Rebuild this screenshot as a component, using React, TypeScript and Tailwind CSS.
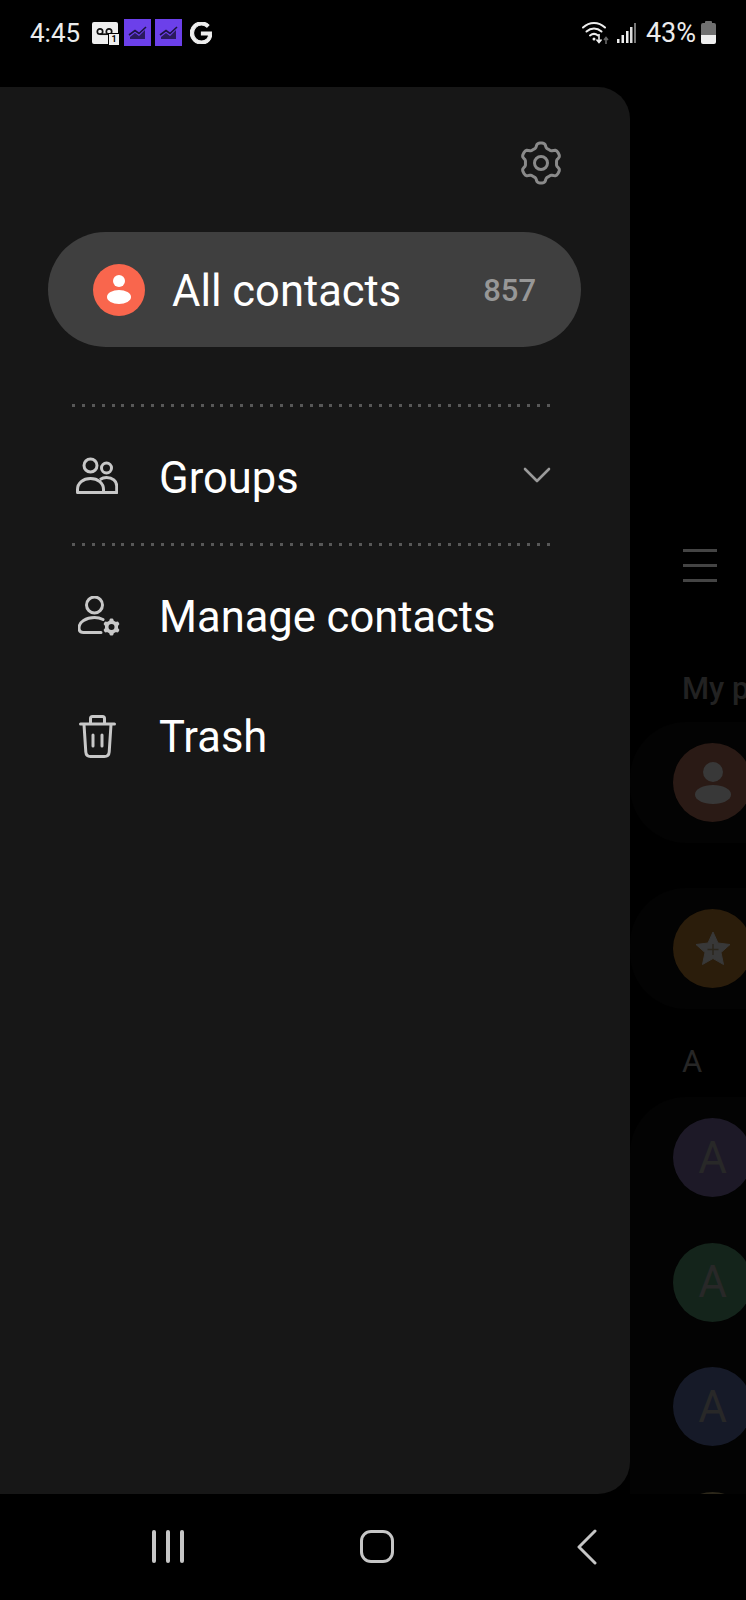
import { ChevronDown } from "lucide-react";
import { SiGoogle } from "react-icons/si";

// six rounded lobes, used for both the big settings gear and the small badge gear
function gearPath(cx: number, cy: number, outer: number, inner: number) {
  const points: string[] = [];
  for (let i = 0; i < 120; i++) {
    const angle = (i / 120) * Math.PI * 2;
    const wave = Math.cos(6 * angle);
    const blend = (Math.tanh(wave * 2.2) + 1) / 2;
    const radius = inner + (outer - inner) * blend;
    const x = cx + radius * Math.sin(angle);
    const y = cy - radius * Math.cos(angle);
    points.push(`${x.toFixed(2)} ${y.toFixed(2)}`);
  }
  return `M${points.join("L")}Z`;
}

function PurpleChart() {
  return (
    <div className="flex h-[27px] w-[27px] items-center justify-center bg-[#6c40ea]">
      <svg viewBox="0 0 27 27" className="h-[27px] w-[27px]">
        <path d="M6 20v-2l5-4 4 3 6-6v9z" fill="#2a1a5e" />
        <path
          d="M5 16l6-4.5 4 3 7-6.5"
          fill="none"
          stroke="#1c1240"
          strokeWidth="1.6"
        />
      </svg>
    </div>
  );
}

function Voicemail() {
  return (
    <div className="relative h-[22px] w-[26px] rounded-[2px] bg-[#efefef]">
      <svg viewBox="0 0 26 22" className="h-[22px] w-[26px]">
        <circle cx="8" cy="9.5" r="2.7" fill="none" stroke="#111" strokeWidth="1.7" />
        <circle cx="17" cy="9.5" r="2.7" fill="none" stroke="#111" strokeWidth="1.7" />
        <path d="M8 12.2h9" stroke="#111" strokeWidth="1.7" />
      </svg>
      <span className="absolute -bottom-[1px] -right-[1px] flex h-[11px] w-[10px] items-center justify-center bg-[#efefef] text-[9px] font-bold leading-none text-black outline outline-1 outline-black">
        1
      </span>
    </div>
  );
}

function StatusBar() {
  return (
    <div className="flex h-[87px] shrink-0 items-start justify-between pl-[30px] pr-[30px] pt-[19px]">
      <div className="flex h-[27px] items-center">
        <span className="text-[26px] leading-none text-[#ececec]">4:45</span>
        <div className="ml-[12px] flex items-center gap-[5px]">
          <Voicemail />
          <div className="ml-[1px]">
            <PurpleChart />
          </div>
          <div className="-ml-[1px]">
            <PurpleChart />
          </div>
          <SiGoogle
            stroke="currentColor"
            strokeWidth={1.2}
            className="ml-[3px] h-[22px] w-[22px] text-[#efefef]"
          />
        </div>
      </div>
      <div className="flex h-[27px] items-center">
        <svg viewBox="0 0 27 26" className="h-[26px] w-[27px]">
          <g fill="none" stroke="#eee" strokeWidth="2" strokeLinecap="round">
            <path d="M1 7.5c6.5-6 15.5-6 22 0" />
            <path d="M4.5 11.5c4.5-4 10.5-4 15 0" />
            <path d="M8 15.5c2.5-2 5.500-2 8 0" />
          </g>
          <circle cx="12" cy="19" r="1.5" fill="#eee" />
          <path d="M17 14v8m-2.500-2.500l2.500 3 2.500-3" fill="none" stroke="#eee" strokeWidth="1.600" />
          <path d="M24 24v-6m-2 2l2-2.500 2 2.500" fill="none" stroke="#666" strokeWidth="1.600" />
        </svg>
        <svg viewBox="0 0 19 22" className="ml-[8px] h-[22px] w-[19px]">
          <rect x="0" y="17" width="2.500" height="4" fill="#eee" />
          <rect x="4.500" y="13" width="2.500" height="8" fill="#eee" />
          <rect x="9" y="9" width="2.500" height="12" fill="#eee" />
          <rect x="13" y="5" width="2.500" height="16" fill="#ddd" />
          <rect x="17" y="1" width="2" height="20" fill="#777" />
        </svg>
        <span className="ml-[10px] mt-[2px] text-[27px] leading-none text-[#ececec]">
          43%
        </span>
        <div className="ml-[5px] flex h-[23px] w-[15px] flex-col items-center">
          <div className="h-[2px] w-[7px] rounded-t-[1px] bg-[#707070]" />
          <div className="flex w-full flex-1 flex-col overflow-hidden rounded-[2px]">
            <div className="flex-1 bg-[#707070]" />
            <div className="h-[9px] bg-[#efefef]" />
          </div>
        </div>
      </div>
    </div>
  );
}

function DottedLine() {
  return (
    <div className="ml-[72px] mr-[78px] h-[3px] bg-[repeating-linear-gradient(90deg,#585858_0,#585858_3px,transparent_3px,transparent_9.9px)]" />
  );
}

function Drawer() {
  return (
    <aside className="w-[630px] shrink-0 rounded-r-[32px] bg-[#171717] pt-[54px]">
      <div className="flex justify-end pr-[67px]">
        <svg viewBox="0 0 44 44" className="h-[44px] w-[44px]">
          <path
            d={gearPath(22, 22, 20, 15.5)}
            fill="none"
            stroke="#8a8a8a"
            strokeWidth="3"
            strokeLinejoin="round"
          />
          <circle cx="22" cy="22" r="6.500" fill="none" stroke="#8a8a8a" strokeWidth="3" />
        </svg>
      </div>
      <div className="ml-[48px] mr-[49px] mt-[47px] flex h-[115px] items-center rounded-full bg-[#3f3f3f] pl-[45px] pr-[45px]">
        <div className="flex h-[52px] w-[52px] shrink-0 flex-col items-center justify-center rounded-full bg-[#f9664d]">
          <div className="h-[12px] w-[12px] rounded-full bg-white" />
          <div className="mt-[3px] h-[14px] w-[24px] rounded-[50%] bg-white" />
        </div>
        <span className="ml-[27px] mt-[5px] flex-1 text-[43.5px] leading-none text-white">
          All contacts
        </span>
        <span className="mt-[2px] text-[31px] font-medium leading-none text-[#979797]">
          857
        </span>
      </div>
      <div className="mt-[57px]">
        <DottedLine />
      </div>
      <div className="flex h-[136px] items-center pl-[76px] pr-[78px]">
        <svg
          viewBox="0 0 42 37"
          className="h-[37px] w-[42px] shrink-0"
          fill="none"
          stroke="#c8c8c8"
          strokeWidth="3"
        >
          <circle cx="14.500" cy="8.500" r="6.500" />
          <circle cx="30.500" cy="11" r="5" />
          <path
            d="M1.500 35.500v-3c0-6.500 5.500-11 13-11s13 4.500 13 11v3zM24 22.500c1.800-1.200 4-2 6.500-2 6 0 10.200 3.500 10.200 8.500v6.500H27.500"
            strokeLinejoin="round"
          />
        </svg>
        <span className="ml-[41px] mt-[7px] flex-1 text-[43.5px] leading-none text-white">
          Groups
        </span>
        <ChevronDown
          strokeWidth={1.3}
          className="-mr-[9px] h-[48px] w-[48px] text-[#9a9a9a]"
        />
      </div>
      <DottedLine />
      <nav className="mt-[9px] flex flex-col">
        <div className="flex h-[121px] items-center pl-[78px]">
          <svg viewBox="0 0 42 40" className="h-[40px] w-[42px] shrink-0">
            <g fill="none" stroke="#c8c8c8" strokeWidth="3" strokeLinecap="round">
              <circle cx="16.500" cy="9" r="8" />
              <path d="M25 23.500c-2.500-1.300-5.500-2-8.500-2-8.500 0-15.500 4.500-15.500 10.500 0 3 1.500 4.500 4.500 4.500H23" />
            </g>
            <path fillRule="evenodd" d={`${gearPath(33.500, 31, 8.500, 6.500)}M33.500 28a3 3 0 1 0 0 6a3 3 0 1 0 0-6z`} fill="#c8c8c8" />
          </svg>
          <span className="ml-[39px] mt-[4px] text-[43.5px] leading-none text-white">
            Manage contacts
          </span>
        </div>
        <div className="flex h-[121px] items-center pl-[79px]">
          <svg
            viewBox="0 0 37 43"
            className="h-[43px] w-[37px] shrink-0"
            fill="none"
            stroke="#c8c8c8"
            strokeWidth="3"
            strokeLinecap="round"
            strokeLinejoin="round"
          >
            <path d="M1.500 9h34" />
            <path d="M11.500 8.500V3.500c0-1.200.8-2 2-2h10c1.200 0 2 .8 2 2v5" />
            <path d="M5 9.500l1.800 27.500c.2 2.800 2 4.500 4.800 4.500h13.800c2.800 0 4.600-1.700 4.800-4.500L32 9.500" />
            <path d="M14 20v11M23 20v11" />
          </svg>
          <span className="ml-[43px] mt-[3px] text-[43.5px] leading-none text-white">
            Trash
          </span>
        </div>
      </nav>
    </aside>
  );
}

function DimAvatar({ color, letter }: { color: string; letter: string }) {
  return (
    <div className={`flex h-[79px] w-[79px] items-center justify-center rounded-full ${color}`}>
      <span className="text-[44px] leading-none text-[#282828]">{letter}</span>
    </div>
  );
}

// the contact list behind the drawer, dimmed by the scrim
function BehindList() {
  return (
    <div className="min-w-0 flex-1 overflow-hidden pt-[462px]">
      <div className="ml-[53px] flex w-[34px] flex-col gap-[12px]">
        <div className="h-[3px] bg-[#444]" />
        <div className="h-[3px] bg-[#444]" />
        <div className="h-[3px] bg-[#444]" />
      </div>
      <div className="ml-[52px] mt-[86px] h-[42px] w-[300px] text-[31px] font-medium leading-[42px] text-[#222]">
        My profile
      </div>
      <div className="mt-[12px] flex h-[121px] w-[400px] items-center rounded-[56px] bg-[#030303] pl-[43px]">
        <div className="flex h-[79px] w-[79px] flex-col items-center justify-center rounded-full bg-[#2a1a15]">
          <div className="h-[20px] w-[20px] rounded-full bg-[#383838]" />
          <div className="mt-[3px] h-[19px] w-[36px] rounded-[50%] bg-[#383838]" />
        </div>
      </div>
      <div className="mt-[45px] flex h-[121px] w-[400px] items-center rounded-[56px] bg-[#030303] pl-[43px]">
        <div className="flex h-[79px] w-[79px] items-center justify-center rounded-full bg-[#2b1d0b]">
          <svg viewBox="0 0 36 36" className="h-[36px] w-[36px]">
            <path
              d="M18 1l5 11 12 1.500-9 8 2.500 12L18 27.500 7.500 33.500 10 21.500l-9-8 12-1.500z"
              fill="#383838"
              stroke="#383838"
              strokeLinejoin="round"
            />
            <path d="M18 13v11M12.500 18.500h11" stroke="#2b261c" strokeWidth="1.500" />
          </svg>
        </div>
      </div>
      <div className="ml-[52px] mt-[32px] h-[42px] text-[31px] leading-[42px] text-[#262626]">
        A
      </div>
      <div className="mt-[14px] flex h-[420px] w-[400px] flex-col gap-[45.500px] rounded-t-[56px] bg-[#030303] pl-[43px] pt-[21px]">
        <div className="shrink-0"><DimAvatar color="bg-[#1d1927]" letter="A" /></div>
        <div className="shrink-0"><DimAvatar color="bg-[#14241b]" letter="A" /></div>
        <div className="shrink-0"><DimAvatar color="bg-[#161a28]" letter="A" /></div>
        <div className="shrink-0"><DimAvatar color="bg-[#2c271a]" letter="" /></div>
      </div>
    </div>
  );
}

function NavBar() {
  return (
    <div className="relative flex h-[106px] shrink-0 items-start bg-black pl-[152px] pt-[36px]">
      <div className="flex h-[33px] w-[32px] justify-between">
        <div className="w-[4px] rounded-full bg-[#c6c6c6]" />
        <div className="w-[4px] rounded-full bg-[#c6c6c6]" />
        <div className="w-[4px] rounded-full bg-[#c6c6c6]" />
      </div>
      <div className="ml-[176px] h-[33px] w-[34px] rounded-[11px] border-[3px] border-[#c6c6c6]" />
      <svg
        viewBox="0 0 20 36"
        className="ml-[183px] -mt-[1px] h-[36px] w-[20px]"
        fill="none"
        stroke="#c6c6c6"
        strokeWidth="3"
        strokeLinecap="round"
        strokeLinejoin="round"
      >
        <path d="M18 2L2 18l16 16" />
      </svg>
    </div>
  );
}

export default function App() {
  return (
    <div className="flex h-[1600px] w-[746px] flex-col overflow-hidden bg-black [font-family:Roboto,sans-serif]">
      <StatusBar />
      <div className="flex min-h-0 flex-1">
        <Drawer />
        <BehindList />
      </div>
      <NavBar />
    </div>
  );
}
